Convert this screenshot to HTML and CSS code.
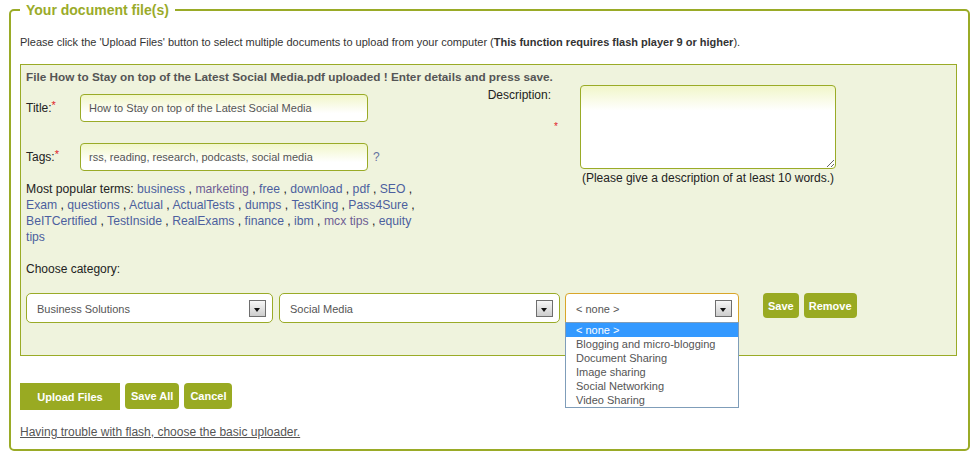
FILE: index.html
```html
<!DOCTYPE html>
<html lang="en">
<head>
    <meta charset="UTF-8">
    <title>Your document file(s)</title>
    <link rel="stylesheet" href="styles.css">
</head>
<body>
    <fieldset class="docs">
        <legend>Your document file(s)</legend>
        <p class="intro">Please click the 'Upload Files' button to select multiple documents to upload from your computer (<b>This function requires flash player 9 or higher</b>).</p>

        <div class="fileBox">
            <h4>File How to Stay on top of the Latest Social Media.pdf uploaded ! Enter details and press save.</h4>
            <div class="details">
                <div class="detailsLeft">
                    <div class="field">
                        <label>Title:<span class="req">*</span></label>
                        <input class="txt" type="text" value="How to Stay on top of the Latest Social Media">
                    </div>
                    <div class="field tags">
                        <label>Tags:<span class="req">*</span></label>
                        <input class="txt" type="text" value="rss, reading, research, podcasts, social media">
                        <span class="help">?</span>
                    </div>
                    <div class="terms">Most popular terms: <a href="#">business</a> , <a href="#" class="seen">marketing</a> , <a href="#">free</a> , <a href="#">download</a> , <a href="#">pdf</a> , <a href="#">SEO</a> , <a href="#">Exam</a> , <a href="#">questions</a> , <a href="#">Actual</a> , <a href="#">ActualTests</a> , <a href="#">dumps</a> , <a href="#">TestKing</a> , <a href="#">Pass4Sure</a> , <a href="#">BeITCertified</a> , <a href="#">TestInside</a> , <a href="#">RealExams</a> , <a href="#">finance</a> , <a href="#">ibm</a> , <a href="#" class="seen">mcx tips</a> , <a href="#">equity tips</a></div>
                    <div class="choose">Choose category:</div>
                </div>
                <div class="detailsRight">
                    <div class="descLabel">
                        <div class="descText">Description:</div>
                        <span class="req">*</span>
                    </div>
                    <div class="descField">
                        <textarea class="desc"></textarea>
                        <div class="hint">(Please give a description of at least 10 words.)</div>
                    </div>
                </div>
            </div>

            <div class="catRow">
                <div class="dd dd1"><span>Business Solutions</span><i class="arrow"></i></div>
                <div class="dd dd2"><span>Social Media</span><i class="arrow"></i></div>
                <div class="ddWrap">
                    <div class="dd dd3 focus"><span>&lt; none &gt;</span><i class="arrow"></i></div>
                    <ul class="ddList">
                        <li class="sel">&lt; none &gt;</li>
                        <li>Blogging and micro-blogging</li>
                        <li>Document Sharing</li>
                        <li>Image sharing</li>
                        <li>Social Networking</li>
                        <li>Video Sharing</li>
                    </ul>
                </div>
                <button class="btn btnSave">Save</button>
                <button class="btn">Remove</button>
            </div>
        </div>

        <div class="actions">
            <button class="btn btnUpload">Upload Files</button>
            <button class="btn btnBig">Save All</button>
            <button class="btn btnBig">Cancel</button>
        </div>
        <a href="#" class="basic">Having trouble with flash, choose the basic uploader.</a>
    </fieldset>
</body>
</html>
```

FILE: styles.css
```css
body {
    margin: 0;
    font-family: "Liberation Sans", Arial, sans-serif;
    font-size: 12px;
    color: #222;
    background: #fff;
}
.docs {
    box-sizing: border-box;
    width: 961px;
    height: 449px;
    margin: 2px 0 0 9px;
    padding: 0 9px;
    border: 2px solid #9aab27;
    border-radius: 5px;
}
.docs legend {
    padding: 0 6px;
    font-size: 14px;
    line-height: 16px;
    font-weight: bold;
    color: #9aab2a;
}
.intro {
    margin: 18px 0 15px;
    font-size: 11px;
    line-height: 13px;
    color: #333;
}
.fileBox {
    width: 925px;
    height: 285px;
    padding: 5px 5px 0;
    border: 1px solid #9aab27;
    background: #eff3dd;
}
.fileBox h4 {
    margin: 0;
    font-size: 11.75px;
    line-height: 14px;
    color: #555;
}
.details {
    display: flex;
}
.detailsLeft {
    width: 400px;
    padding-top: 10px;
}
.field {
    display: flex;
    align-items: center;
    height: 28px;
}
.field label {
    width: 54px;
}
.tags {
    margin-top: 21px;
}
.req {
    color: #e0202a;
    font-size: 11px;
    vertical-align: top;
    position: relative;
    top: -2px;
}
.txt {
    box-sizing: border-box;
    width: 288px;
    height: 28px;
    padding: 0 8px;
    border: 1px solid #9aab27;
    border-radius: 4px;
    background: linear-gradient(#f1f6c9, #fff 70%);
    font-family: inherit;
    font-size: 11px;
    color: #555;
    outline: none;
}
.help {
    margin-left: 5px;
    color: #6572a0;
}
.terms {
    margin-top: 10px;
    font-size: 12.2px;
    line-height: 16px;
}
.terms a {
    color: #4c5f9e;
    text-decoration: none;
}
.terms a.seen {
    color: #6e5e94;
}
.choose {
    margin-top: 16px;
    line-height: 16px;
}
.detailsRight {
    display: flex;
    padding-top: 1px;
}
.descLabel {
    width: 132px;
    text-align: right;
}
.descText {
    margin-top: 3px;
    padding-right: 7px;
    line-height: 14px;
}
.descLabel .req {
    display: block;
    margin-top: 18px;
    line-height: 14px;
    font-size: 10px;
    top: 0;
}
.descField {
    margin-left: 22px;
    width: 256px;
}
.desc {
    box-sizing: border-box;
    display: block;
    width: 256px;
    height: 84px;
    border: 1px solid #9aab27;
    border-radius: 4px;
    background: linear-gradient(#f1f6c9, #fff 30%);
    resize: both;
    outline: none;
}
.hint {
    margin: 1px -6px 0;
    text-align: center;
    line-height: 16px;
    white-space: nowrap;
}
.catRow {
    display: flex;
    align-items: flex-start;
    margin-top: 16px;
}
.dd {
    box-sizing: border-box;
    display: flex;
    align-items: center;
    justify-content: space-between;
    height: 30px;
    padding: 1px 6px 0 10px;
    border: 1px solid #9aab27;
    border-radius: 5px;
    background: #fff;
    font-size: 11px;
    color: #555;
}
.dd1 {
    width: 247px;
}
.dd2 {
    width: 281px;
    margin-left: 6px;
}
.dd3 {
    width: 174px;
}
.dd.focus {
    border-color: #d9a62a;
    border-radius: 4px 4px 0 0;
}
.arrow {
    position: relative;
    box-sizing: border-box;
    width: 17px;
    height: 17px;
    border: 1px solid #6e6e6e;
    background: linear-gradient(#f7f7f7, #cdcdcd);
}
.arrow::after {
    content: "";
    position: absolute;
    left: 4px;
    top: 7px;
    border-left: 3.5px solid transparent;
    border-right: 3.5px solid transparent;
    border-top: 4px solid #111;
}
.ddWrap {
    position: relative;
    margin-left: 5px;
}
.ddList {
    position: absolute;
    top: 29px;
    left: 0;
    box-sizing: border-box;
    width: 174px;
    margin: 0;
    padding: 0;
    list-style: none;
    border: 1px solid #7f9db9;
    background: #fff;
    z-index: 2;
}
.ddList li {
    height: 14px;
    padding-left: 10px;
    font-size: 11px;
    line-height: 14px;
    color: #555;
}
.ddList li.sel {
    background: #3399ff;
    color: #fff;
}
.btn {
    height: 25px;
    padding: 0 5px;
    border: 0;
    border-radius: 4px;
    background: #99aa22;
    color: #fff;
    font-family: inherit;
    font-size: 11px;
    font-weight: bold;
}
.btnSave {
    margin-left: 24px;
    margin-right: 5px;
}
.actions {
    display: flex;
    gap: 5px;
    margin-top: 27px;
}
.btnUpload {
    width: 100px;
    height: 27px;
    border-radius: 0;
}
.btnBig {
    height: 26px;
    padding: 0 6px;
}
.basic {
    display: inline-block;
    margin-top: 15px;
    color: #555;
    line-height: 14px;
}
```
